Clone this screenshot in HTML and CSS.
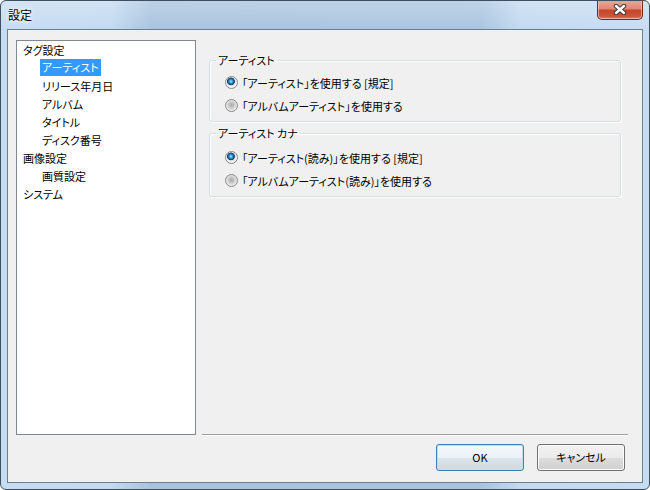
FILE: index.html
```html
<!DOCTYPE html>
<html lang="ja">
<head>
<meta charset="utf-8">
<title>設定</title>
<link rel="stylesheet" href="styles.css">
</head>
<body>
<div class="window">
  <div class="titlebar">
    <span class="title">設定</span>
    <div class="close">
      <svg width="14" height="11" viewBox="0 0 14 11">
        <path d="M3 2 L11 9 M11 2 L3 9" stroke="#3a3a3a" stroke-width="4.4" stroke-linecap="round"/>
        <path d="M3 2 L11 9 M11 2 L3 9" stroke="#ffffff" stroke-width="2.4" stroke-linecap="round"/>
      </svg>
    </div>
  </div>
  <div class="client">
    <div class="main">
      <ul class="tree">
        <li class="node">タグ設定</li>
        <li class="node child"><span class="sel">アーティスト</span></li>
        <li class="node child">リリース年月日</li>
        <li class="node child">アルバム</li>
        <li class="node child">タイトル</li>
        <li class="node child">ディスク番号</li>
        <li class="node">画像設定</li>
        <li class="node child">画質設定</li>
        <li class="node">システム</li>
      </ul>
      <div class="panel">
        <fieldset class="group g1">
          <legend>アーティスト</legend>
          <label class="opt"><input type="radio" name="a" checked><span>「アーティスト」を使用する [規定]</span></label>
          <label class="opt"><input type="radio" name="a"><span>「アルバムアーティスト」を使用する</span></label>
        </fieldset>
        <fieldset class="group g2">
          <legend>アーティスト カナ</legend>
          <label class="opt"><input type="radio" name="b" checked><span>「アーティスト(読み)」を使用する [規定]</span></label>
          <label class="opt"><input type="radio" name="b"><span>「アルバムアーティスト(読み)」を使用する</span></label>
        </fieldset>
      </div>
    </div>
    <div class="footer">
      <button class="btn default">OK</button>
      <button class="btn">キャンセル</button>
    </div>
  </div>
</div>
</body>
</html>
```

FILE: styles.css
```css
* { box-sizing: border-box; }
html, body { margin: 0; padding: 0; }
body {
  width: 650px;
  height: 490px;
  overflow: hidden;
  background: #ffffff;
  font-family: "Noto Sans CJK JP", "Noto Sans", sans-serif;
  font-size: 11px;
  font-feature-settings: "palt";
  color: #000;
}
.window {
  width: 650px;
  height: 490px;
  border: 1px solid #3d4f60;
  border-radius: 6px;
  background:
    linear-gradient(180deg, rgba(255,255,255,0.25) 0, rgba(255,255,255,0) 30px),
    linear-gradient(90deg, #c6dcf1 0, #c3daf0 110px, #a8c3de 150px, #a9c4df 480px, #c3daf0 520px, #c6dcf1 100%);
  display: flex;
  flex-direction: column;
  overflow: hidden;
}
.titlebar {
  height: 28px;
  flex: none;
  display: flex;
  align-items: flex-start;
  padding-left: 7px;
}
.title {
  line-height: 28px;
  font-size: 12px;
  text-shadow: 0 0 6px #fff, 0 0 3px #fff;
}
.close {
  margin-left: auto;
  margin-right: 6px;
  margin-top: -1px;
  width: 46px;
  height: 20px;
  border: 1px solid #6c2c20;
  border-top: none;
  border-radius: 0 0 5px 5px;
  background: linear-gradient(180deg, #e9a899 0, #dd8a76 45%, #c8452c 55%, #c8553a 85%, #d98a70 100%);
  box-shadow: inset 0 0 0 1px rgba(255,220,210,0.55);
  display: flex;
  align-items: center;
  justify-content: center;
}
.client {
  margin: 0 6px;
  height: 454px;
  border: 1px solid #6b7f92;
  background: #f0f0f0;
  padding: 10px 0 0 8px;
  display: flex;
  flex-direction: column;
}
.main {
  display: flex;
  height: 395px;
}
.tree {
  list-style: none;
  margin: 0;
  padding: 0 0 0 6px;
  width: 180px;
  height: 395px;
  background: #fff;
  border: 1px solid #828790;
}
.node {
  height: 18px;
  line-height: 18px;
  white-space: nowrap;
}
.child { padding-left: 17px; }
.child:not(:has(.sel)) { padding-left: 19px; }
.sel {
  display: inline-block;
  background: #3399ff;
  color: #fff;
  padding: 0 2px;
  line-height: 17px;
  vertical-align: top;
}
.panel {
  margin-left: 6px;
  width: 426px;
  height: 395px;
  border-bottom: 1px solid #a0a0a0;
  box-shadow: 0 1px 0 #ffffff;
  padding: 0 7px 0 7px;
}
.group {
  margin: 0;
  padding: 0;
  border: 1px solid #d5dfe5;
  border-radius: 3px;
  box-shadow: inset 1px 1px 0 #fff, 1px 1px 0 #fff;
  min-width: 0;
}
.group legend {
  padding: 0 2px;
  margin-left: 6px;
  line-height: 16px;
}
.g1 { margin-top: 12px; padding-top: 3px; padding-bottom: 4px; }
.g2 { margin-top: 3px; padding-top: 5px; padding-bottom: 4px; }
.opt {
  display: flex;
  align-items: center;
  height: 23px;
  padding-left: 15px;
  white-space: nowrap;
}
.opt span { margin-left: 4px; }
.opt input {
  appearance: none;
  -webkit-appearance: none;
  margin: 0;
  width: 13px;
  height: 13px;
  border-radius: 50%;
  border: 1px solid #85888b;
  background: radial-gradient(circle at 50% 45%, #a9a9a9 0, #c4c4c4 2.5px, #dedede 4.5px, #f3f3f3 6px);
  flex: none;
}
.opt input:checked {
  background:
    radial-gradient(circle at 45% 40%, #b5e6fb 0, #3c9bd6 1.6px, #10598f 3px, #20405e 3.6px, rgba(0,0,0,0) 4.2px),
    radial-gradient(circle at 50% 45%, #c9c9c9 0, #dcdcdc 3px, #f4f4f4 5px, #fefefe 6px);
}
.footer {
  display: flex;
  justify-content: flex-end;
  gap: 13px;
  padding-right: 17px;
  margin-top: 9px;
}
.btn {
  width: 88px;
  height: 27px;
  border: 1px solid #707070;
  border-radius: 3px;
  background: linear-gradient(180deg, #f2f2f2 0, #ebebeb 50%, #dddddd 50%, #cfcfcf 100%);
  box-shadow: inset 0 0 0 1px #fcfcfc;
  font-family: inherit;
  font-size: 11px;
  font-feature-settings: "palt";
  color: #000;
  padding: 0;
  line-height: 25px;
}
.btn.default {
  border-color: #3c7fb1;
  box-shadow: inset 0 0 0 1px #b9e2f6;
  background: linear-gradient(180deg, #f3f8fb 0, #ecf2f6 50%, #dde5eb 50%, #d0dae2 100%);
}
```
